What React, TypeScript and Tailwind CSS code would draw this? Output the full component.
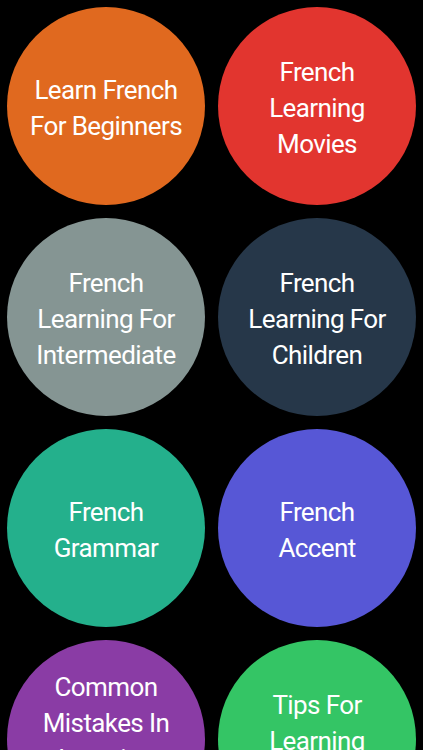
import React from "react";

const items: { lines: string[]; color: string }[] = [
  { lines: ["Learn French", "For Beginners"], color: "bg-[#e0691f]" },
  { lines: ["French", "Learning", "Movies"], color: "bg-[#e2352f]" },
  { lines: ["French", "Learning For", "Intermediate"], color: "bg-[#859593]" },
  { lines: ["French", "Learning For", "Children"], color: "bg-[#263749]" },
  { lines: ["French", "Grammar"], color: "bg-[#24b08c]" },
  { lines: ["French", "Accent"], color: "bg-[#5757d6]" },
  { lines: ["Common", "Mistakes In", "Learning", "French"], color: "bg-[#8a3ca5]" },
  { lines: ["Tips For", "Learning", "French"], color: "bg-[#34c565]" },
];

export default function App() {
  return (
    <div className="w-[423px] h-[750px] overflow-hidden bg-black">
      <div className="grid grid-cols-2 gap-x-[13px] gap-y-[13px] px-[7px] pt-[7px]">
        {items.map((it, i) => (
          <div
            key={i}
            className={`w-[198px] h-[198px] rounded-full ${it.color} flex flex-col items-center justify-center pt-[4px] text-white text-[26px] leading-[36px] tracking-[-0.6px]`}
            style={{ fontFamily: "Roboto, 'Liberation Sans', sans-serif" }}
          >
            {it.lines.map((l, j) => (
              <span key={j} className="whitespace-nowrap">
                {l}
              </span>
            ))}
          </div>
        ))}
      </div>
    </div>
  );
}
